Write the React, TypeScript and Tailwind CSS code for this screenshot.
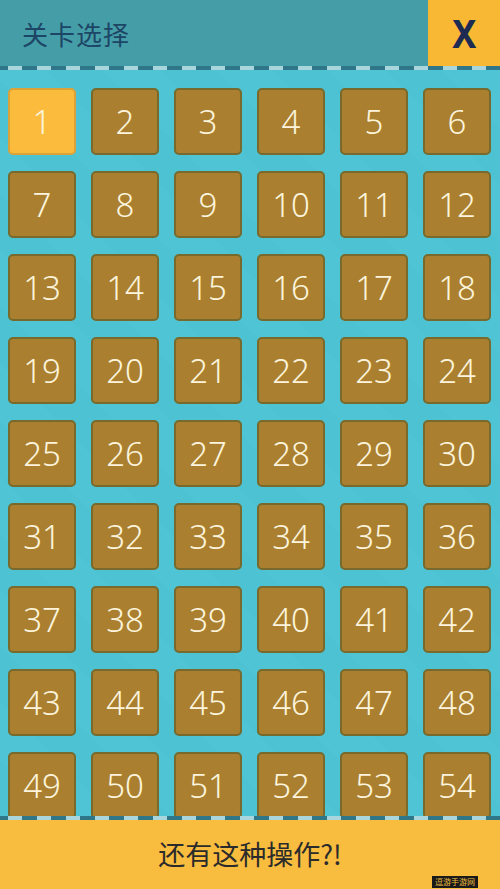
import React from "react";

const levels = Array.from({ length: 54 }, (_, i) => i + 1);

const Dashes = () => (
  <div className="h-[4px] w-full shrink-0 bg-[repeating-linear-gradient(90deg,#2e7688_0px,#2e7688_8px,#a9d5dc_8px,#a9d5dc_22px,#2e7688_22px,#2e7688_29px)]" />
);

export default function App() {
  return (
    <div className="w-[500px] h-[889px] flex flex-col overflow-hidden bg-[#4cc2d3] font-['Noto_Sans','Noto_Sans_CJK_SC',sans-serif]">
      {/* header */}
      <div className="h-[66px] shrink-0 flex bg-[#459ea7]">
        <div className="flex-1 flex items-center pl-[22px]">
          <span className="text-[26px] text-[#1d4565] font-['Noto_Sans_CJK_SC',sans-serif] tracking-[1px]">关卡选择</span>
        </div>
        <div className="w-[72px] flex items-center justify-center bg-[#f8b833]">
          <span className="text-[40px] font-bold text-[#1d2b52] leading-none font-['Noto_Sans',sans-serif] scale-x-90">X</span>
        </div>
      </div>
      <Dashes />

      {/* level grid */}
      <div className="flex-1 overflow-hidden pt-[18px] pl-[8px] bg-[repeating-linear-gradient(45deg,#4cc2d3_0px,#4cc2d3_40px,#4fc4d5_40px,#4fc4d5_80px)]">
        <div className="grid grid-cols-[repeat(6,68px)] gap-x-[15px] gap-y-[16px]">
          {levels.map((n) => (
            <div
              key={n}
              className={
                n === 1
                  ? "h-[67px] rounded-[5px] border-2 border-[#dca23a] bg-[#fbbb3c] flex items-center justify-center"
                  : "h-[67px] rounded-[5px] border-2 border-[#786a2c] bg-[#aa8030] flex items-center justify-center"
              }
            >
              <span className="text-[33px] font-light text-[#fcf4dc] leading-none">{n}</span>
            </div>
          ))}
        </div>
      </div>

      <Dashes />
      {/* footer */}
      <div className="h-[69px] shrink-0 bg-[#f8bc3e] flex items-center justify-center relative">
        <span className="text-[27px] text-[#2b2b2b] font-['Noto_Sans_CJK_SC',sans-serif]">还有这种操作?!</span>
        <div className="absolute right-[22px] bottom-[1px] h-[12px] px-[3px] bg-[#1a1a1a] flex items-center">
          <span className="text-[8px] leading-none text-[#f3c040] font-['Noto_Sans_CJK_SC',sans-serif]">逗游手游网</span>
        </div>
      </div>
    </div>
  );
}
